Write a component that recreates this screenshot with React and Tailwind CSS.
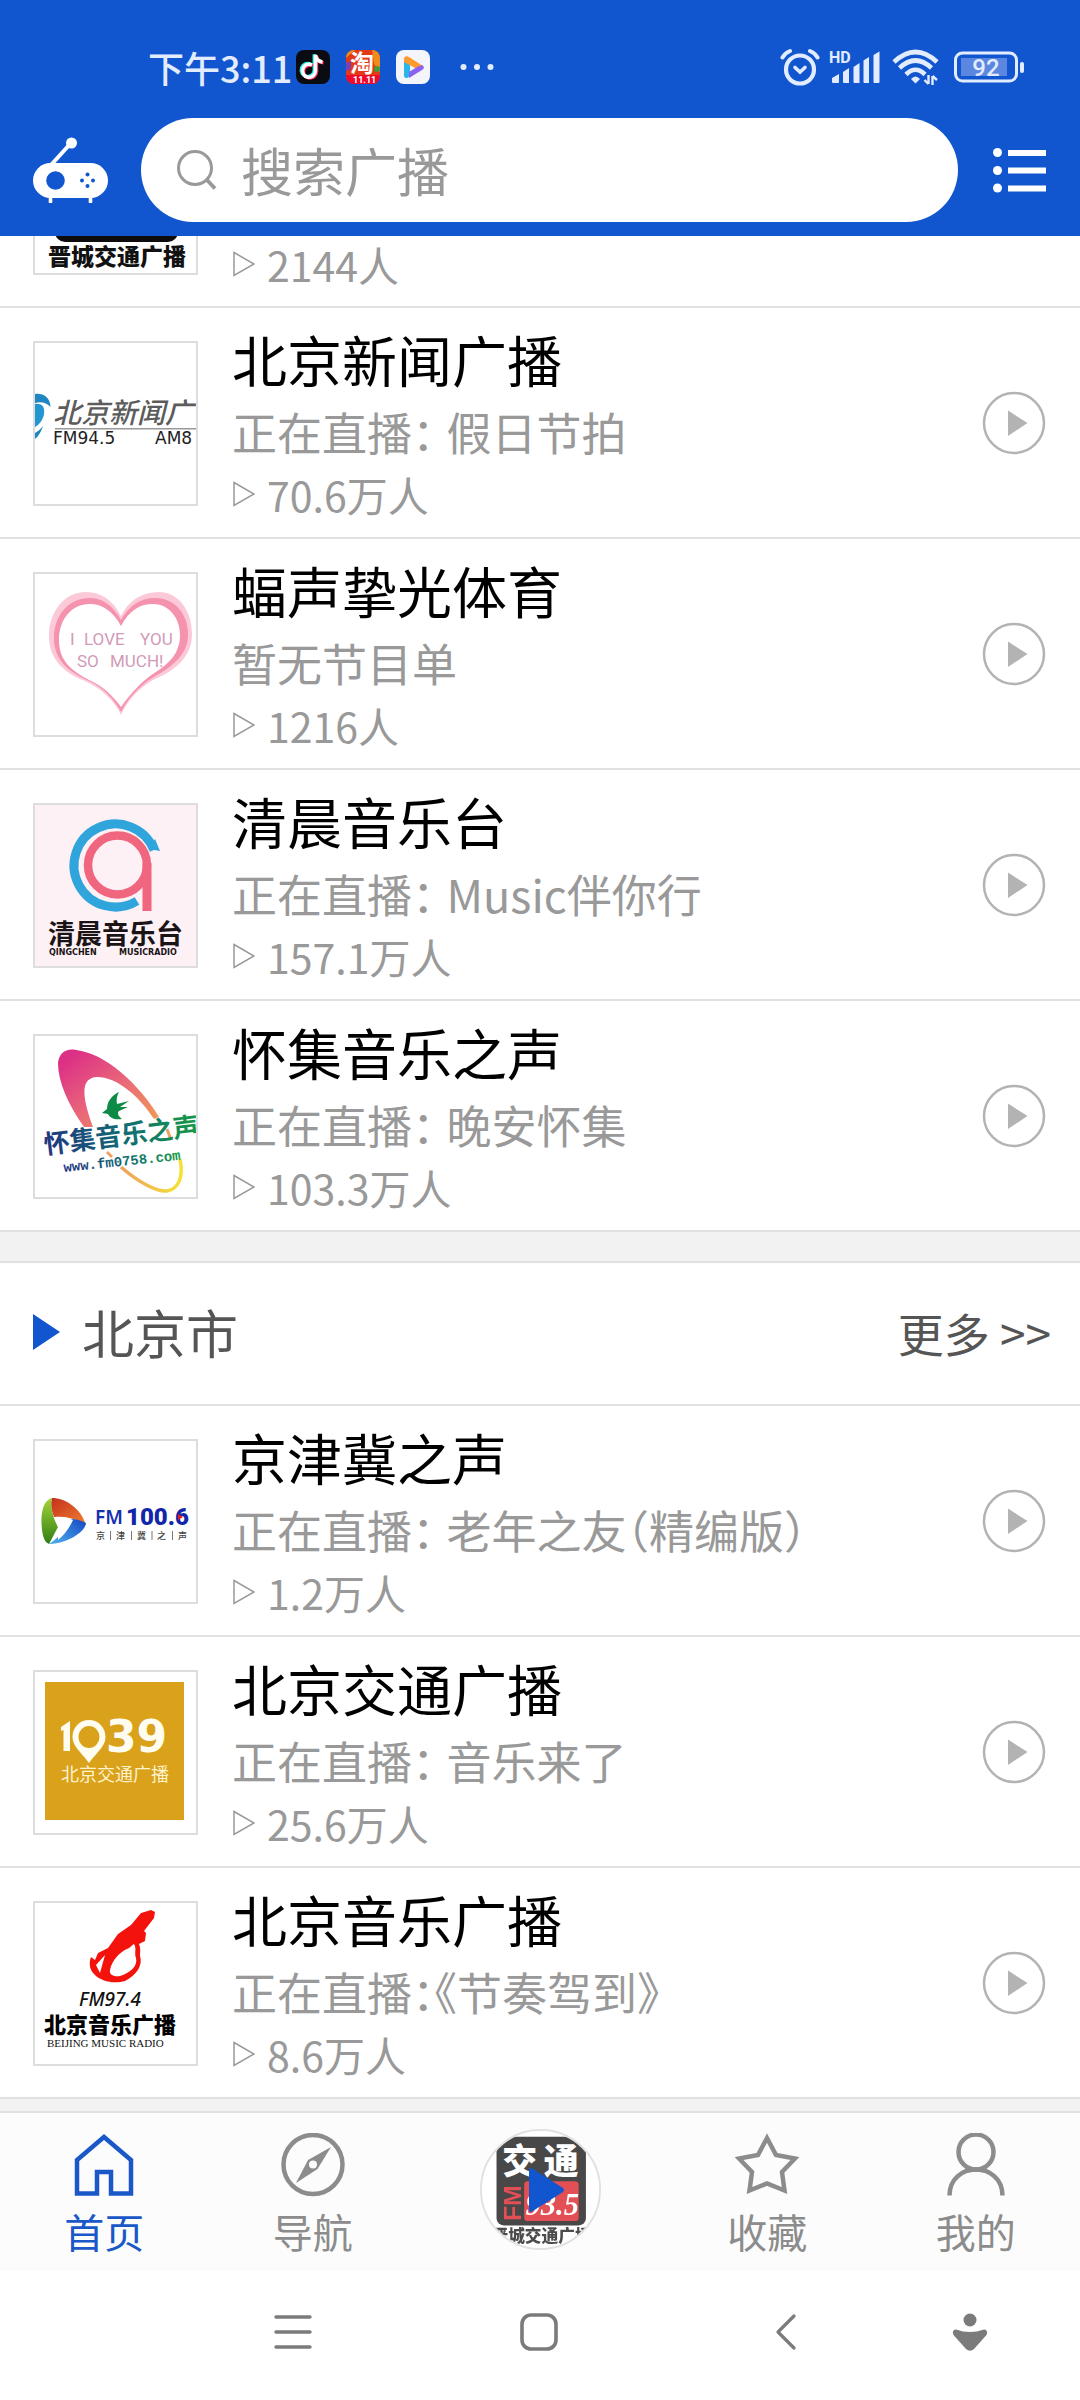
import React from "react";

const CJK = '"Noto Sans CJK SC", sans-serif';

/* ---------- Station logos (161 × 161 canvas) ---------- */

function JinchengLogo() {
  return (
    <svg viewBox="0 0 161 161" className="block h-full w-full" fontFamily={CJK}>
      <rect width="161" height="161" fill="#fff" />
      <rect x="20" y="8" width="123" height="122" rx="10" fill="#0d0b0c" />
      <text x="28" y="59" fontSize="48" fontWeight="900" fill="#fff">交</text>
      <text x="85" y="59" fontSize="48" fontWeight="900" fill="#fff">通</text>
      <rect x="58" y="69" width="75" height="55" rx="5" fill="#d8141c" />
      <text transform="translate(53 124) rotate(-90)" fontSize="34" fontWeight="700" fill="#d8141c" fontFamily='"Liberation Sans", sans-serif'>FM</text>
      <text x="60" y="115" fontSize="42" fontWeight="700" fontStyle="italic" fill="#fff" fontFamily='"Liberation Serif", serif'>93.5</text>
      <text x="13" y="153" fontSize="23" fontWeight="900" fill="#111">晋城交通广播</text>
    </svg>
  );
}

function BeijingNewsLogo() {
  return (
    <svg viewBox="0 0 161 161" className="block h-full w-full" fontFamily={CJK}>
      <path d="M0 51C8 50 15 54 15.500 64C12 60 6 58 0 60Z" fill="#1f86c0" />
      <path d="M0 61C7 60 10 64 9 71C8 77 4 82 0 84Z" fill="#2196cf" />
      <path d="M0 90C3 88 6 86 8 83C6 89 3 94 0 96Z" fill="#1f86c0" />
      <text x="18" y="80" fontSize="28" fontWeight="500" fontStyle="italic" fill="#5c5c5c">北京新闻广</text>
      <rect x="20" y="85" width="141" height="1.500" fill="#999" />
      <text x="18" y="101" fontSize="17" fill="#222" fontFamily='"DejaVu Sans", sans-serif'>FM94.5</text>
      <text x="120" y="101" fontSize="17" fill="#222" fontFamily='"DejaVu Sans", sans-serif'>AM8</text>
    </svg>
  );
}

function HeartLogo() {
  return (
    <svg viewBox="0 0 161 161" className="block h-full w-full">
      <path d="M86 42C78 26 66 18 51 18C29 18 14 38 14 62C14 84 27 98 50 107C66 114 80 127 86 141C92 127 104 114 118 106C142 96 157 82 157 60C157 36 143 18 124 18C107 18 94 26 86 42Z" fill="#fcc9d8" />
      <path d="M86 46C78 31 66 23 53 24C32 25 19 43 19 64C19 85 32 97 52 106C68 113 80 126 86 138C92 126 103 113 117 104C139 92 153 80 153 60C153 40 140 25 122 24C107 23 94 31 86 46Z" fill="#f593ae" />
      <path d="M86 52C78 37 67 30 55 30C36 30 24 46 24 66C24 86 35 96 54 106C68 112 79 123 86 133C93 123 103 111 115 102C134 90 145 80 145 61C145 43 133 30 118 30C104 30 94 37 86 52Z" fill="#fff" />
      <g fontSize="17" fill="#d19bb8" fontFamily="Roboto, sans-serif">
        <text x="35" y="71">I</text>
        <text x="49" y="71">LOVE</text>
        <text x="105" y="71">YOU</text>
        <text x="42" y="93">SO</text>
        <text x="75" y="93">MUCH!</text>
      </g>
    </svg>
  );
}

function QingchenLogo() {
  return (
    <svg viewBox="0 0 161 161" className="block h-full w-full" fontFamily={CJK}>
      <rect width="161" height="161" fill="#fdf1f6" />
      <path d="M119 45A41.500 41.500 0 1 0 102 96" fill="none" stroke="#2fa5dc" strokeWidth="9" />
      <path d="M114 44L125 46L120 34Z" fill="#2fa5dc" />
      <circle cx="82.500" cy="60" r="29.500" fill="none" stroke="#f0667f" strokeWidth="8.500" />
      <rect x="107.500" y="58" width="9" height="48" fill="#f0667f" />
      <text x="13" y="139" fontSize="27" fontWeight="700" fill="#1b1416">清晨音乐台</text>
      <g fontSize="8" fontWeight="700" fill="#1b1416" fontFamily='"DejaVu Sans", sans-serif'>
        <text x="14" y="150">QINGCHEN</text>
        <text x="84" y="150">MUSICRADIO</text>
      </g>
    </svg>
  );
}

function HuaijiLogo() {
  return (
    <svg viewBox="0 0 161 161" className="block h-full w-full" fontFamily={CJK}>
      <defs>
        <linearGradient id="hj-swoosh" x1="0" y1="0" x2="1" y2="1">
          <stop offset="0.100" stopColor="#dc2f86" />
          <stop offset="0.550" stopColor="#ea6a78" />
          <stop offset="1" stopColor="#f0a050" />
        </linearGradient>
        <linearGradient id="hj-text" x1="0" y1="0" x2="1" y2="0">
          <stop offset="0" stopColor="#20357f" />
          <stop offset="0.550" stopColor="#0f6f73" />
          <stop offset="1" stopColor="#169a45" />
        </linearGradient>
        <linearGradient id="hj-tail" x1="0" y1="0" x2="1" y2="0">
          <stop offset="0" stopColor="#f0a060" />
          <stop offset="1" stopColor="#f3e233" />
        </linearGradient>
      </defs>
      <path d="M49 91C33 68 23 46 23 27C24 17 31 12 41 14C70 17 104 48 124 81L119 83C104 60 82 41 62 41C46 42 46 58 58 91Z" fill="url(#hj-swoosh)" />
      <path d="M132 93L136 104M72 116L77 121" stroke="#f0a060" strokeWidth="3" />
      <path d="M86 131C103 146 122 156 132 155C143 153 149 142 145 123" fill="none" stroke="url(#hj-tail)" strokeWidth="3.500" />
      <path d="M84 56C76 60 72 66 72 73L67 77L73 78C75 82 79 84 87 83C83 80 82 77 84 75L93 71L85 71L94 65L82 68C81 63 82 60 84 56Z" fill="#0d8a45" />
      <text transform="translate(10 118) rotate(-7)" fontSize="26" fontWeight="700" fill="url(#hj-text)">怀集音乐之声</text>
      <text transform="translate(29 136) rotate(-6)" fontSize="14" fontWeight="700" fill="url(#hj-text)" fontFamily='"Liberation Mono", monospace'>www.fm0758.com</text>
    </svg>
  );
}

function JingjinjiLogo() {
  return (
    <svg viewBox="0 0 161 161" className="block h-full w-full" fontFamily={CJK}>
      <defs>
        <linearGradient id="jj-green" x1="0" y1="0" x2="0" y2="1">
          <stop offset="0" stopColor="#a4d43a" />
          <stop offset="1" stopColor="#2f7d12" />
        </linearGradient>
        <linearGradient id="jj-red" x1="0" y1="0" x2="1" y2="1">
          <stop offset="0" stopColor="#c4301c" />
          <stop offset="1" stopColor="#f08030" />
        </linearGradient>
        <linearGradient id="jj-blue" x1="1" y1="0" x2="0" y2="1">
          <stop offset="0" stopColor="#1546c4" />
          <stop offset="1" stopColor="#4fb4ee" />
        </linearGradient>
      </defs>
      <path d="M17 57C9 59 6 70 6.500 82C7 94 9 101 14 103L23 86C18 77 15 66 17 57Z" fill="url(#jj-green)" />
      <path d="M17 57C30 57 46 67 51 84C42 77 32 76 19 76C16 68 16 62 17 57Z" fill="url(#jj-red)" />
      <path d="M51 82C50 92 30 103 14 103C22 98 32 88 36 78C42 78 47 80 51 82Z" fill="url(#jj-blue)" />
      <path d="M19 76C27 75 33 76 38 79C34 88 29 94 23 99L23 86Z" fill="#fff" />
      <text x="60" y="83" fontSize="19" fontWeight="600" fill="#1730b0" fontFamily='"Noto Sans", sans-serif'>FM</text>
      <text x="91" y="84" fontSize="24" fontWeight="900" fill="#1226a8" fontFamily="Roboto, sans-serif">100.6</text>
      <path d="M143 73L148 76L143 79Z" fill="#e02020" />
      <g fontSize="9" fontWeight="500" fill="#444">
        <text x="61" y="98">京</text>
        <text x="81" y="98">津</text>
        <text x="102" y="98">冀</text>
        <text x="122" y="98">之</text>
        <text x="143" y="98">声</text>
      </g>
      <path d="M75.500 90V99M96.500 90V99M117 90V99M137.500 90V99" stroke="#777" strokeWidth="1" />
    </svg>
  );
}

function Traffic1039Logo() {
  return (
    <svg viewBox="0 0 161 161" className="block h-full w-full" fontFamily={CJK}>
      <rect x="10" y="10" width="139" height="138" fill="#daa11b" />
      <path d="M26 55L35 49V79H28.500V58L26 59Z" fill="#fffdf0" />
      <path d="M54 48C44.500 48 37.500 55.500 37.500 65C37.500 74 45 79 54 91C63 79 70.500 74 70.500 65C70.500 55.500 63.500 48 54 48ZM54 54A10.500 11 0 1 1 54 76A10.500 11 0 1 1 54 54Z" fill="#fffdf0" fillRule="evenodd" />
      <text x="71" y="80" fontSize="44" fontWeight="700" fill="#fffdf0" fontFamily='"DejaVu Sans", sans-serif'>39</text>
      <text x="26" y="109" fontSize="18" fontWeight="400" fill="#fff3cc">北京交通广播</text>
    </svg>
  );
}

function BeijingMusicLogo() {
  return (
    <svg viewBox="0 0 161 161" className="block h-full w-full" fontFamily={CJK}>
      <path d="M116 7L120 9L119 15L109 28L111 30L110 38L104 41C106 46 105 49 105 53C108 62 102 72 90 78C80 81 66 79 59 71C54 66 54 59 56 54L60 57L63 50L73 45L83 31L96 22L106 10Z" fill="#f3130c" />
      <path d="M99 41C102 46 99 50 101 55C103 63 95 70 85 73C79 74 74 72 75 67C77 57 85 49 92 46C95 45 97 42 99 41Z" fill="#fff" />
      <path d="M70 52L65 70L61 62Z" fill="#fff" />
      <text x="44" y="103" fontSize="19" fontWeight="500" fontStyle="italic" fill="#111" fontFamily='"Noto Sans", sans-serif'>FM97.4</text>
      <text x="9" y="130" fontSize="22" fontWeight="900" fill="#000">北京音乐广播</text>
      <text x="12" y="144" fontSize="11" fill="#111" fontFamily='"Liberation Serif", serif'>BEIJING MUSIC RADIO</text>
    </svg>
  );
}

/* ---------- Status bar ---------- */

function StatusBar() {
  return (
    <div className="flex h-[118px] items-center justify-between pt-[18px] pr-[54px] pb-[2px] pl-[148px] text-[#e3ecff]">
      <div className="flex items-center">
        <span className="text-[36px] leading-[48px] font-medium">下午3:11</span>
        <svg viewBox="0 0 34 34" className="ml-1 h-[34px] w-[34px]">
          <rect width="34" height="34" rx="8" fill="#0b0b12" />
          <g fill="none" strokeWidth="3.500">
            <path d="M16 15a6.500 6.500 0 1 0 3.500 6V5c.5 4 3 6.500 7 7" stroke="#25f4ee" transform="translate(-1.200 -0.800)" />
            <path d="M16 15a6.500 6.500 0 1 0 3.500 6V5c.5 4 3 6.500 7 7" stroke="#fe2c55" transform="translate(1 0.800)" />
            <path d="M16 15a6.500 6.500 0 1 0 3.500 6V5c.5 4 3 6.500 7 7" stroke="#fff" />
          </g>
        </svg>
        <svg viewBox="0 0 34 34" className="ml-4 h-[34px] w-[34px]" fontFamily={CJK}>
          <defs>
            <clipPath id="tb-clip"><rect width="34" height="34" rx="8" /></clipPath>
          </defs>
          <g clipPath="url(#tb-clip)">
            <rect width="34" height="34" fill="#e23a17" />
            <path d="M0 8L9 0H0ZM26 0H34V22L28 14Z" fill="#f08c1a" />
            <path d="M0 13L5 11V19L0 21Z" fill="#7a3fb0" />
            <circle cx="31" cy="19" r="3" fill="#3f9b3c" />
            <rect y="25" width="34" height="9" fill="#ee0a2c" />
            <text x="4" y="22" fontSize="24" fontWeight="700" fill="#fff">淘</text>
            <text x="7" y="33" fontSize="9" fontWeight="700" fill="#fff" fontFamily="Roboto, sans-serif">11.11</text>
          </g>
        </svg>
        <svg viewBox="0 0 34 34" className="ml-4 h-[34px] w-[34px]">
          <rect width="34" height="34" rx="8" fill="#f3f5fa" />
          <path d="M8 8V25a2.500 2.500 0 0 0 4 2.500L14 26V11Z" fill="#28b7e8" />
          <path d="M8 9C8 6 11 5.500 13 7L27 16L21 19L8 12Z" fill="#ff9a2e" />
          <path d="M26 15C29 17 28 19 26 20L13 28V22L21 17Z" fill="#8a63f2" />
        </svg>
        <svg viewBox="0 0 34 8" className="ml-[30px] h-2 w-[34px]" fill="currentColor">
          <circle cx="3.500" cy="4" r="3" /><circle cx="17" cy="4" r="3" /><circle cx="30.500" cy="4" r="3" />
        </svg>
      </div>
      <div className="flex items-center">
        <svg viewBox="0 0 40 38" className="h-[38px] w-10" fill="none" stroke="currentColor" strokeLinecap="round">
          <circle cx="20" cy="21.500" r="14" strokeWidth="4.200" />
          <path d="M2.500 9.500Q5 5 10 3M37.500 9.500Q35 5 30 3" strokeWidth="4" />
          <path d="M15 19.500L20 24L25 19.500" strokeWidth="3.600" />
        </svg>
        <svg viewBox="0 0 50 34" className="ml-[10px] h-[34px] w-[50px] overflow-visible" fill="currentColor">
          <text x="-1" y="12.500" fontSize="16" fontWeight="700" fontFamily="Roboto, sans-serif">HD</text>
          <path d="M2 28L9 24V32a1 1 0 0 1-1 1H3a1 1 0 0 1-1-1ZM13 22L19 18V33H14a1 1 0 0 1-1-1ZM23.500 17L29.500 13V33H24.500a1 1 0 0 1-1-1ZM33.500 10.500L39 7V33H34.500a1 1 0 0 1-1-1ZM43.500 5L49.500 1.500V32a1 1 0 0 1-1 1H44.500a1 1 0 0 1-1-1Z" />
        </svg>
        <svg viewBox="0 0 48 36" className="ml-3 h-9 w-12" fill="none" stroke="currentColor">
          <path d="M2 13Q23.500 -7 45 13" strokeWidth="4.600" />
          <path d="M7.500 19Q23.500 4 39.500 19" strokeWidth="4.600" />
          <path d="M14 25.500Q23.500 16 33 25.500" strokeWidth="4.600" />
          <path d="M19 30Q23.500 25 28 30L23.500 34.500Z" fill="currentColor" stroke="none" />
          <path d="M36.500 26V35M32.500 31L36.500 35M40.500 36V27M40.500 27L45 31" strokeWidth="2.400" />
        </svg>
        <svg viewBox="0 0 72 32" className="ml-[14px] h-8 w-[72px]">
          <rect x="1.500" y="2" width="61" height="28" rx="7" fill="none" stroke="currentColor" strokeWidth="3" />
          <rect x="7" y="7" width="46" height="18" fill="#5b87e0" />
          <rect x="66" y="11" width="4" height="11" rx="2" fill="currentColor" />
          <text x="32" y="25" textAnchor="middle" fontSize="24" fontWeight="500" fill="currentColor" fontFamily="Roboto, sans-serif">92</text>
        </svg>
      </div>
    </div>
  );
}

/* ---------- Header ---------- */

function Header() {
  return (
    <header className="bg-[#1156cf]">
      <StatusBar />
      <div className="flex h-[118px] items-start pl-[33px]">
        <svg viewBox="0 0 76 66" className="mt-[19px] h-[66px] w-[76px] shrink-0" role="img" aria-label="收音机">
          <path d="M18 28L38 6" stroke="#fff" strokeWidth="4" />
          <circle cx="38.500" cy="6" r="5.500" fill="#fff" />
          <rect y="26" width="75" height="35" rx="17.500" fill="#fff" />
          <path d="M17.500 60V65M57.500 60V65" stroke="#fff" strokeWidth="3.600" strokeLinecap="round" />
          <circle cx="22.500" cy="43.500" r="9.300" fill="#1156cf" />
          <circle cx="54.500" cy="37.500" r="2" fill="#1156cf" />
          <circle cx="54.500" cy="49" r="2" fill="#1156cf" />
          <circle cx="49" cy="43.500" r="2" fill="#1156cf" />
          <circle cx="60" cy="43.500" r="2" fill="#1156cf" />
        </svg>
        <label className="ml-8 flex h-[104px] min-w-0 flex-1 items-center rounded-full bg-white pl-9">
          <svg viewBox="0 0 40 40" className="h-10 w-10 shrink-0" fill="none" stroke="#999" strokeWidth="3">
            <circle cx="18" cy="18" r="16.500" />
            <path d="M29.500 29.500L38 38.500" strokeWidth="4" />
          </svg>
          <input
            type="search"
            aria-label="搜索广播"
            placeholder="搜索广播"
            className="ml-6 h-[76px] min-w-0 flex-1 bg-transparent text-[52px] text-gray-700 outline-none placeholder:text-[#999]"
          />
        </label>
        <button type="button" aria-label="列表" className="mt-[26px] mr-[33px] ml-[33px] shrink-0">
          <svg viewBox="0 0 56 52" className="block h-[52px] w-14" fill="#fff">
            <circle cx="6.500" cy="8.500" r="4.500" /><circle cx="6.500" cy="26.500" r="4.500" /><circle cx="6.500" cy="44" r="4.500" />
            <rect x="17" y="6" width="38" height="6" /><rect x="17" y="23.500" width="38" height="6" /><rect x="17" y="41.500" width="38" height="6" />
          </svg>
        </button>
      </div>
    </header>
  );
}

/* ---------- Station list ---------- */

function Thumb({ children }) {
  return (
    <div className="h-[165px] w-[165px] shrink-0 overflow-hidden border-2 border-[#ddd] bg-white">{children}</div>
  );
}

function Listeners({ count }) {
  return (
    <p className="flex h-[46px] items-center text-[41px] leading-[46px] text-[#999]">
      <svg viewBox="0 0 22 26" className="mr-3 ml-px h-[26px] w-[22px]" fill="none" stroke="#999" strokeWidth="1.500">
        <path d="M1 1.500L21 13L1 24.500Z" />
      </svg>
      <span>{count}</span>
    </p>
  );
}

function StationRow({ station }) {
  const { name, program, spaced, note, count, Logo } = station;
  return (
    <li className="flex border-b-2 border-[#e1e1e1] pt-[33px] pr-[34px] pb-[31px] pl-[33px]">
      <Thumb><Logo /></Thumb>
      <div className="-my-4 ml-[34px] min-w-0 flex-1">
        <h3 className="text-[55px] leading-[66px] text-black">{name}</h3>
        <p className="mt-2 text-[45px] leading-[66px] whitespace-nowrap text-[#999] [font-feature-settings:'halt']">
          {note || (
            <>
              <span>正在直播：</span>
              <span className={spaced ? "ml-3" : ""}>{program}</span>
            </>
          )}
        </p>
        <div className="mt-[6px]"><Listeners count={count} /></div>
      </div>
      <button type="button" aria-label={`播放 ${name}`} className="-mt-px h-16 w-16 shrink-0 self-center">
        <svg viewBox="0 0 64 64" className="block h-16 w-16">
          <circle cx="32" cy="32" r="30" fill="none" stroke="#b3b3b3" strokeWidth="2.500" />
          <path d="M26 19.500L45.500 32L26 45Z" fill="#b3b3b3" />
        </svg>
      </button>
    </li>
  );
}

const popular = [
  { name: "北京新闻广播", program: "假日节拍", spaced: true, count: "70.6万人", Logo: BeijingNewsLogo },
  { name: "蝠声挚光体育", note: "暂无节目单", count: "1216人", Logo: HeartLogo },
  { name: "清晨音乐台", program: "Music伴你行", spaced: true, count: "157.1万人", Logo: QingchenLogo },
  { name: "怀集音乐之声", program: "晚安怀集", spaced: true, count: "103.3万人", Logo: HuaijiLogo },
];

const beijing = [
  { name: "京津冀之声", program: "老年之友（精编版）", spaced: true, count: "1.2万人", Logo: JingjinjiLogo },
  { name: "北京交通广播", program: "音乐来了", spaced: true, count: "25.6万人", Logo: Traffic1039Logo },
  { name: "北京音乐广播", program: "《节奏驾到》", spaced: false, count: "8.6万人", Logo: BeijingMusicLogo },
];

/* ---------- Bottom bars ---------- */

const tabIcons = {
  home: (
    <path d="M5 60.500V27L32 4L59 27V60.500H39V39H25V60.500Z" />
  ),
  compass: (
    <>
      <circle cx="32" cy="31.500" r="29.500" />
      <path d="M50 14L36.500 36L15 50L27 27Z" fill="currentColor" stroke="none" />
      <circle cx="32" cy="31.500" r="4" fill="#fcfcfc" stroke="none" />
    </>
  ),
  star: (
    <path d="M32 5L41 22L60 25.500L47 39L49.500 57.500L32 50.500L14.500 57.500L17 39L4 25.500L23 22Z" />
  ),
  person: (
    <>
      <circle cx="32" cy="19" r="17.500" />
      <path d="M5.500 62.500C5.500 46 18 36.500 32 36.500S58.500 46 58.500 62.500" />
    </>
  ),
};

function Tab({ icon, label, active }) {
  return (
    <button
      type="button"
      aria-current={active ? "page" : undefined}
      className={active ? "flex flex-1 flex-col items-center pt-5 text-[#1a58c8]" : "flex flex-1 flex-col items-center pt-5 text-[#8c8c8c]"}
    >
      <svg viewBox="0 0 64 64" className="h-16 w-16" fill="none" stroke="currentColor" strokeWidth="4.500">
        {tabIcons[icon]}
      </svg>
      <span className="mt-2 text-[40px] leading-[52px]">{label}</span>
    </button>
  );
}

function TabBar() {
  return (
    <nav className="flex h-[160px] border-t-2 border-[#e1e1e1] bg-[#fcfcfc]">
      <Tab icon="home" label="首页" active />
      <Tab icon="compass" label="导航" />
      <div className="flex w-[246px] justify-center pt-4">
        <button type="button" aria-label="播放" className="relative h-[121px] w-[121px] overflow-hidden rounded-full border-2 border-[#e1e1e1] bg-white">
          <div className="h-[117px] w-[117px] opacity-75"><JinchengLogo /></div>
          <svg viewBox="0 0 36 46" className="absolute top-[36px] left-[47px] h-[46px] w-9" fill="#1156cf">
            <path d="M0 3Q0 0 3 1.500L34 21Q36 23 34 25L3 44.500Q0 46 0 43Z" />
          </svg>
        </button>
      </div>
      <Tab icon="star" label="收藏" />
      <Tab icon="person" label="我的" />
    </nav>
  );
}

function SystemNav() {
  return (
    <nav className="flex h-[129px] items-center bg-white pr-12 pb-2 pl-[170px] text-[#7b7b7b]">
      <button type="button" aria-label="菜单" className="flex flex-[2] justify-center">
        <svg viewBox="0 0 38 38" className="h-[38px] w-[38px]" stroke="currentColor" strokeWidth="3.400" strokeLinecap="round">
          <path d="M2 4H36M2 19H36M2 34H36" />
        </svg>
      </button>
      <button type="button" aria-label="主屏幕" className="flex flex-[2] justify-center">
        <svg viewBox="0 0 38 38" className="h-[38px] w-[38px]" fill="none" stroke="currentColor" strokeWidth="3.600">
          <rect x="2" y="2" width="34" height="34" rx="9" />
        </svg>
      </button>
      <button type="button" aria-label="返回" className="flex flex-[2] justify-center">
        <svg viewBox="0 0 38 38" className="h-[38px] w-[38px]" fill="none" stroke="currentColor" strokeWidth="3.200" strokeLinecap="round" strokeLinejoin="round">
          <path d="M27 3L11 19L27 35" />
        </svg>
      </button>
      <button type="button" aria-label="收起" className="flex flex-1 justify-center">
        <svg viewBox="0 0 38 38" className="h-[38px] w-[38px]" fill="currentColor">
          <circle cx="19" cy="7" r="6.500" />
          <path d="M5 16.500Q19 21.500 33 16.500Q37.500 17 35.500 22L23 36Q19 39.500 15 36L2.500 22Q.5 17 5 16.500Z" />
        </svg>
      </button>
    </nav>
  );
}

export default function App() {
  return (
    <div className="flex min-h-screen flex-col bg-white font-['Noto_Sans_CJK_SC',sans-serif]" lang="zh-CN">
      <Header />
      <main className="flex-1">
        {/* Row scrolled partly under the header */}
        <div className="flex h-[72px] items-end overflow-hidden border-b-2 border-[#e1e1e1] pb-[31px] pl-[33px]">
          <Thumb><JinchengLogo /></Thumb>
          <div className="-mb-3 ml-[34px]"><Listeners count="2144人" /></div>
        </div>
        <ul>
          {popular.map((s) => <StationRow key={s.name} station={s} />)}
        </ul>
        <section className="border-t-[29px] border-[#f2f2f2]">
          <div className="flex h-[145px] items-center justify-between border-y-2 border-[#e1e1e1] pr-[29px] pb-1 pl-[33px]">
            <h2 className="flex items-center text-[52px] leading-[72px] text-[#555]">
              <svg viewBox="0 0 27 36" className="mr-[22px] h-9 w-[27px]" fill="#1156cf"><path d="M0 0L27 18L0 36Z" /></svg>
              北京市
            </h2>
            <a href="#beijing" className="text-[46px] leading-[72px] text-[#555]">更多 &gt;&gt;</a>
          </div>
          <ul>
            {beijing.map((s) => <StationRow key={s.name} station={s} />)}
          </ul>
        </section>
        <div className="h-3 bg-[#f2f2f2]" />
      </main>
      <TabBar />
      <SystemNav />
    </div>
  );
}
